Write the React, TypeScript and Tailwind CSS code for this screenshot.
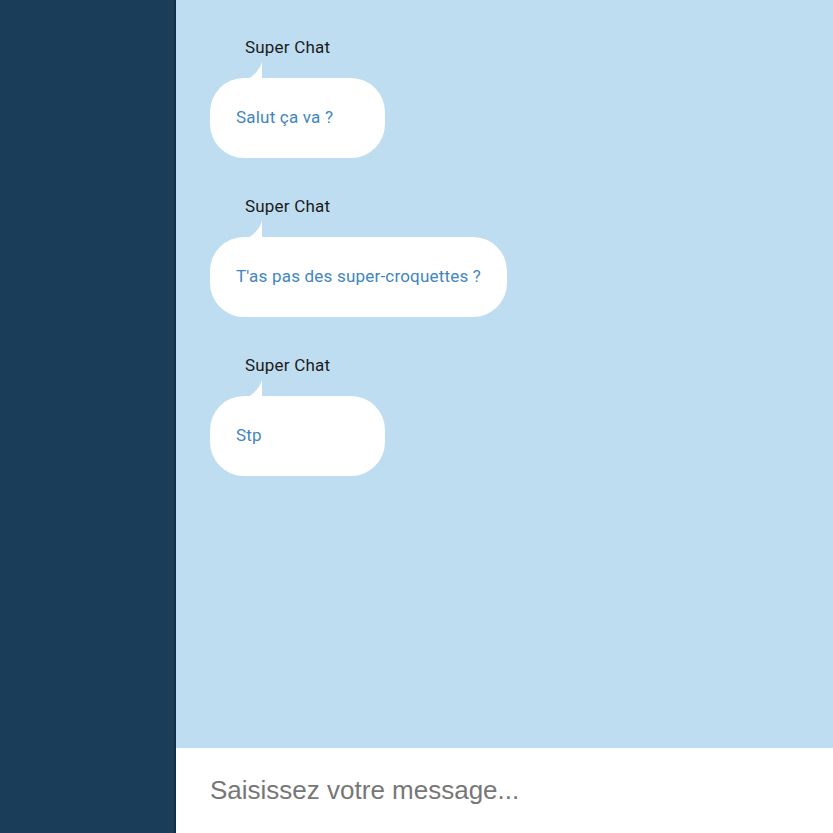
const messages = [
  { author: "Super Chat", text: "Salut ça va ?" },
  { author: "Super Chat", text: "T'as pas des super-croquettes ?" },
  { author: "Super Chat", text: "Stp" },
];

function Message({ author, text }: { author: string; text: string }) {
  return (
    <div className="flex flex-col items-start">
      <div className="ml-[35px] text-[17px] tracking-[0.2px] leading-[20px] text-[#1b1b1b]">{author}</div>
      <div className="relative mt-[21px] min-w-[175px] h-[80px] rounded-[34px] bg-white px-[26px] flex items-center">
        <svg className="absolute -top-[16px] left-[36px]" width="17" height="18" viewBox="0 0 17 18">
          <path d="M16 0 L16 18 L0 18 Q12 12 16 0 Z" fill="#ffffff" />
        </svg>
        <span className="text-[17px] tracking-[0.2px] text-[#3f86c0]">{text}</span>
      </div>
    </div>
  );
}

export default function App() {
  return (
    <div className="flex h-screen w-full font-['Roboto',sans-serif]">
      {/* Sidebar */}
      <aside className="w-[176px] shrink-0 bg-[#1a3d5a] border-r-2 border-[#112f47]"></aside>

      {/* Chat */}
      <main className="flex-1 flex flex-col bg-[#bfddf0]">
        <div className="flex-1 flex flex-col gap-[38px] pl-[34px] pt-[37px]">
          {messages.map((m, i) => (
            <Message key={i} author={m.author} text={m.text} />
          ))}
        </div>
        <div className="h-[85px] bg-white flex items-center pl-[34px]">
          <input
            className="w-full outline-none bg-transparent text-[26px] text-[#333] placeholder:text-[#777] font-['Liberation_Sans',Arial,sans-serif]"
            placeholder="Saisissez votre message..."
          />
        </div>
      </main>
    </div>
  );
}
